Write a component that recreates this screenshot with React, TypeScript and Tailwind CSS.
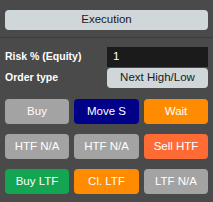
import React from "react";

const btns: { label: string; cls: string }[] = [
  { label: "Buy", cls: "bg-[#a3a3a3] text-white" },
  { label: "Move S", cls: "bg-[#000088] text-white" },
  { label: "Wait", cls: "bg-[#ff8c00] text-white" },
  { label: "HTF N/A", cls: "bg-[#a3a3a3] text-white" },
  { label: "HTF N/A", cls: "bg-[#a3a3a3] text-white" },
  { label: "Sell HTF", cls: "bg-[#ff6b35] text-white" },
  { label: "Buy LTF", cls: "bg-[#14a552] text-white" },
  { label: "Cl. LTF", cls: "bg-[#ff8c00] text-white" },
  { label: "LTF N/A", cls: "bg-[#a3a3a3] text-white" },
];

export default function App() {
  return (
    <div
      className="w-[213px] h-[202px] bg-[#4a4a4a] overflow-hidden"
      style={{ fontFamily: '"Liberation Sans", Arial, sans-serif' }}
    >
      <div className="px-[5px] pt-[10px]">
        <div className="h-[20px] w-[203px] rounded-[4px] bg-[#d0d7db] flex items-center justify-center text-[11.5px] text-[#1a1a1a]">
          Execution
        </div>
      </div>
      <div className="mt-[7px] h-px bg-[#3d3d3d]" />
      <div className="mt-[9px] pl-[5px] pr-[5px] flex flex-col gap-[1px]">
        <div className="flex items-center h-[20px]">
          <div className="w-[102px] text-[10.5px] font-bold text-white">Risk % (Equity)</div>
          <div className="w-[101px] h-[20px] bg-[#1b1b1b] flex items-center pl-[6px] text-[11.5px] text-white">1</div>
        </div>
        <div className="flex items-center h-[20px]">
          <div className="w-[102px] text-[10.5px] font-bold text-white">Order type</div>
          <div className="w-[101px] h-[20px] rounded-[4px] bg-[#d0d7db] flex items-center justify-center text-[11.5px] text-[#1a1a1a]">
            Next High/Low
          </div>
        </div>
      </div>
      <div className="mt-[11px] px-[5px] grid grid-cols-[64px_65px_64px] gap-x-[5px] gap-y-[10px]">
        {btns.map((b, i) => (
          <div
            key={i}
            className={`h-[25px] rounded-[4px] flex items-center justify-center text-[11.5px] ${b.cls}`}
          >
            {b.label}
          </div>
        ))}
      </div>
    </div>
  );
}
